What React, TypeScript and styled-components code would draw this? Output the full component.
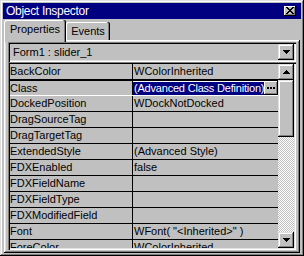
import React from "react";
import styled, { createGlobalStyle } from "styled-components";

const Global = createGlobalStyle`
  html, body { margin: 0; padding: 0; background: #c0c0c0; }
  body { font-family: "Liberation Sans", Arial, sans-serif; font-size: 11px; }
  * { box-sizing: border-box; }
`;

const raised = `
  box-shadow: inset -1px -1px #000, inset 1px 1px #dfdfdf, inset -2px -2px #808080, inset 2px 2px #fff;
`;
const sunken = `
  box-shadow: inset 1px 1px #808080, inset 2px 2px #000, inset -1px -1px #fff, inset -2px -2px #dfdfdf;
`;

const Window = styled.div`
  width: 304px;
  height: 256px;
  padding: 3px;
  background: #c0c0c0;
  display: flex;
  flex-direction: column;
  box-shadow: inset -1px -1px #000, inset 1px 1px #dfdfdf, inset -2px -2px #808080, inset 2px 2px #fff;
  overflow: hidden;
`;

const TitleBar = styled.div`
  height: 16px;
  flex: none;
  background: #000080;
  color: #fff;
  display: flex;
  align-items: center;
  justify-content: space-between;
  padding: 0 5px 0 3px;
  font-size: 12px;
  line-height: 16px;
  letter-spacing: -0.3px;
`;

const CloseButton = styled.div`
  width: 12px;
  height: 10px;
  background: #c0c0c0;
  display: flex;
  align-items: center;
  justify-content: center;
  box-shadow: inset -1px -1px #000, inset 1px 1px #fff, inset -2px -2px #808080;
  svg { display: block; margin-top: -1px; }
`;

const Body = styled.div`
  flex: 1;
  display: flex;
  flex-direction: column;
  padding: 0 1px;
  min-height: 0;
`;

const TabStrip = styled.div`
  height: 21px;
  flex: none;
  display: flex;
  align-items: flex-end;
`;

const Tab = styled.div<{ $active?: boolean }>`
  position: relative;
  background: #c0c0c0;
  color: #000;
  display: flex;
  justify-content: center;
  border-radius: 2px 2px 0 0;
  box-shadow: inset -1px 0 #000, inset -2px 0 #808080, inset 1px 1px #fff;
  width: ${(p) => (p.$active ? 62 : 44)}px;
  height: ${(p) => (p.$active ? 22 : 18)}px;
  margin-bottom: ${(p) => (p.$active ? -2 : 0)}px;
  z-index: ${(p) => (p.$active ? 1 : 0)};
  padding-top: 3px;
  line-height: 13px;
`;

const Panel = styled.div`
  flex: 1;
  min-height: 0;
  display: flex;
  flex-direction: column;
  padding: 2px 4px 3px 4px;
  box-shadow: inset -1px -1px #000, inset 1px 1px #fff, inset -2px -2px #808080, inset 2px 2px #dfdfdf;
`;

const Combo = styled.div`
  height: 20px;
  flex: none;
  padding: 2px;
  display: flex;
  align-items: center;
  ${sunken}
`;

const ComboText = styled.div`
  flex: 1;
  padding-left: 3px;
  line-height: 16px;
`;

const ArrowButton = styled.div`
  width: 16px;
  height: 16px;
  flex: none;
  background: #c0c0c0;
  display: flex;
  align-items: center;
  justify-content: center;
  ${raised}
  svg { display: block; }
`;

const Grid = styled.div`
  height: 188px;
  flex: none;
  padding: 2px;
  display: flex;
  ${sunken}
`;

const Rows = styled.div`
  flex: 1;
  min-width: 0;
  overflow: hidden;
  display: flex;
  flex-direction: column;
`;

const Row = styled.div<{ $selected?: boolean }>`
  height: 16px;
  flex: none;
  display: flex;
  border-bottom: 1px solid ${(p) => (p.$selected ? "#fff" : "#000")};
  border-top: ${(p) => (p.$selected ? "1px solid #000" : "none")};
`;

const NameCell = styled.div`
  width: 123px;
  flex: none;
  border-right: 1px solid #000;
  line-height: 15px;
  white-space: nowrap;
  overflow: hidden;
`;

const ValueCell = styled.div`
  flex: 1;
  min-width: 0;
  padding-left: 1px;
  line-height: 15px;
  white-space: nowrap;
  overflow: hidden;
  display: flex;
`;

const Editor = styled.div`
  flex: 1;
  min-width: 0;
  overflow: hidden;
  background: #fff;
  margin-left: -1px;
  display: flex;
  align-items: center;
`;

const Selection = styled.span`
  background: #000080;
  color: #fff;
  line-height: 13px;
  padding-left: 1px;
  letter-spacing: -0.2px;
`;

const EllipsisButton = styled.div`
  width: 14px;
  flex: none;
  background: #c0c0c0;
  display: flex;
  align-items: center;
  justify-content: center;
  box-shadow: inset -1px -1px #000, inset 1px 1px #fff, inset -2px -2px #808080;
  svg { display: block; }
`;

const ScrollBar = styled.div`
  width: 16px;
  flex: none;
  display: flex;
  flex-direction: column;
`;

const Thumb = styled.div`
  height: 57px;
  flex: none;
  background: #c0c0c0;
  ${raised}
`;

const Track = styled.div`
  flex: 1;
  background: repeating-conic-gradient(#c0c0c0 0 25%, #fff 0 50%) 0 0 / 2px 2px;
`;

const Down = () => (
  <svg width="7" height="4" viewBox="0 0 7 4" shapeRendering="crispEdges">
    <path d="M0 0h7v1h-1v1h-1v1h-1v1h-1v-1h-1v-1h-1v-1h-1z" fill="#000" />
  </svg>
);

const Up = () => (
  <svg width="7" height="4" viewBox="0 0 7 4" shapeRendering="crispEdges">
    <path d="M3 0h1v1h1v1h1v1h1v1h-7v-1h1v-1h1v-1h1z" fill="#000" />
  </svg>
);

const CloseGlyph = () => (
  <svg width="8" height="7" viewBox="0 0 8 7" shapeRendering="crispEdges">
    <path
      d="M0 0h2v1h-2z M6 0h2v1h-2z M1 1h2v1h-2z M5 1h2v1h-2z M2 2h4v1h-4z M3 3h2v1h-2z M2 4h4v1h-4z M1 5h2v1h-2z M5 5h2v1h-2z M0 6h2v1h-2z M6 6h2v1h-2z"
      fill="#000"
    />
  </svg>
);

const Dots = () => (
  <svg width="8" height="2" viewBox="0 0 8 2" shapeRendering="crispEdges">
    <path d="M0 0h2v2h-2z M3 0h2v2h-2z M6 0h2v2h-2z" fill="#000" />
  </svg>
);

const props: { name: string; value: string; selected?: boolean }[] = [
  { name: "BackColor", value: "WColorInherited" },
  { name: "Class", value: "(Advanced Class Definition)", selected: true },
  { name: "DockedPosition", value: "WDockNotDocked" },
  { name: "DragSourceTag", value: "" },
  { name: "DragTargetTag", value: "" },
  { name: "ExtendedStyle", value: "(Advanced Style)" },
  { name: "FDXEnabled", value: "false" },
  { name: "FDXFieldName", value: "" },
  { name: "FDXFieldType", value: "" },
  { name: "FDXModifiedField", value: "" },
  { name: "Font", value: 'WFont( "<Inherited>" )' },
  { name: "ForeColor", value: "WColorInherited" },
];

export default function App() {
  return (
    <>
      <Global />
      <Window>
        <TitleBar>
          <span>Object Inspector</span>
          <CloseButton>
            <CloseGlyph />
          </CloseButton>
        </TitleBar>
        <Body>
          <TabStrip>
            <Tab $active>Properties</Tab>
            <Tab>Events</Tab>
          </TabStrip>
          <Panel>
            <Combo>
              <ComboText>Form1 : slider_1</ComboText>
              <ArrowButton>
                <Down />
              </ArrowButton>
            </Combo>
            <Grid>
              <Rows>
                {props.map((p) => (
                  <Row key={p.name} $selected={p.selected}>
                    <NameCell>{p.name}</NameCell>
                    <ValueCell>
                      {p.selected ? (
                        <>
                          <Editor>
                            <Selection>{p.value}</Selection>
                          </Editor>
                          <EllipsisButton>
                            <Dots />
                          </EllipsisButton>
                        </>
                      ) : (
                        p.value
                      )}
                    </ValueCell>
                  </Row>
                ))}
              </Rows>
              <ScrollBar>
                <ArrowButton>
                  <Up />
                </ArrowButton>
                <Thumb />
                <Track />
                <ArrowButton>
                  <Down />
                </ArrowButton>
              </ScrollBar>
            </Grid>
          </Panel>
        </Body>
      </Window>
    </>
  );
}
